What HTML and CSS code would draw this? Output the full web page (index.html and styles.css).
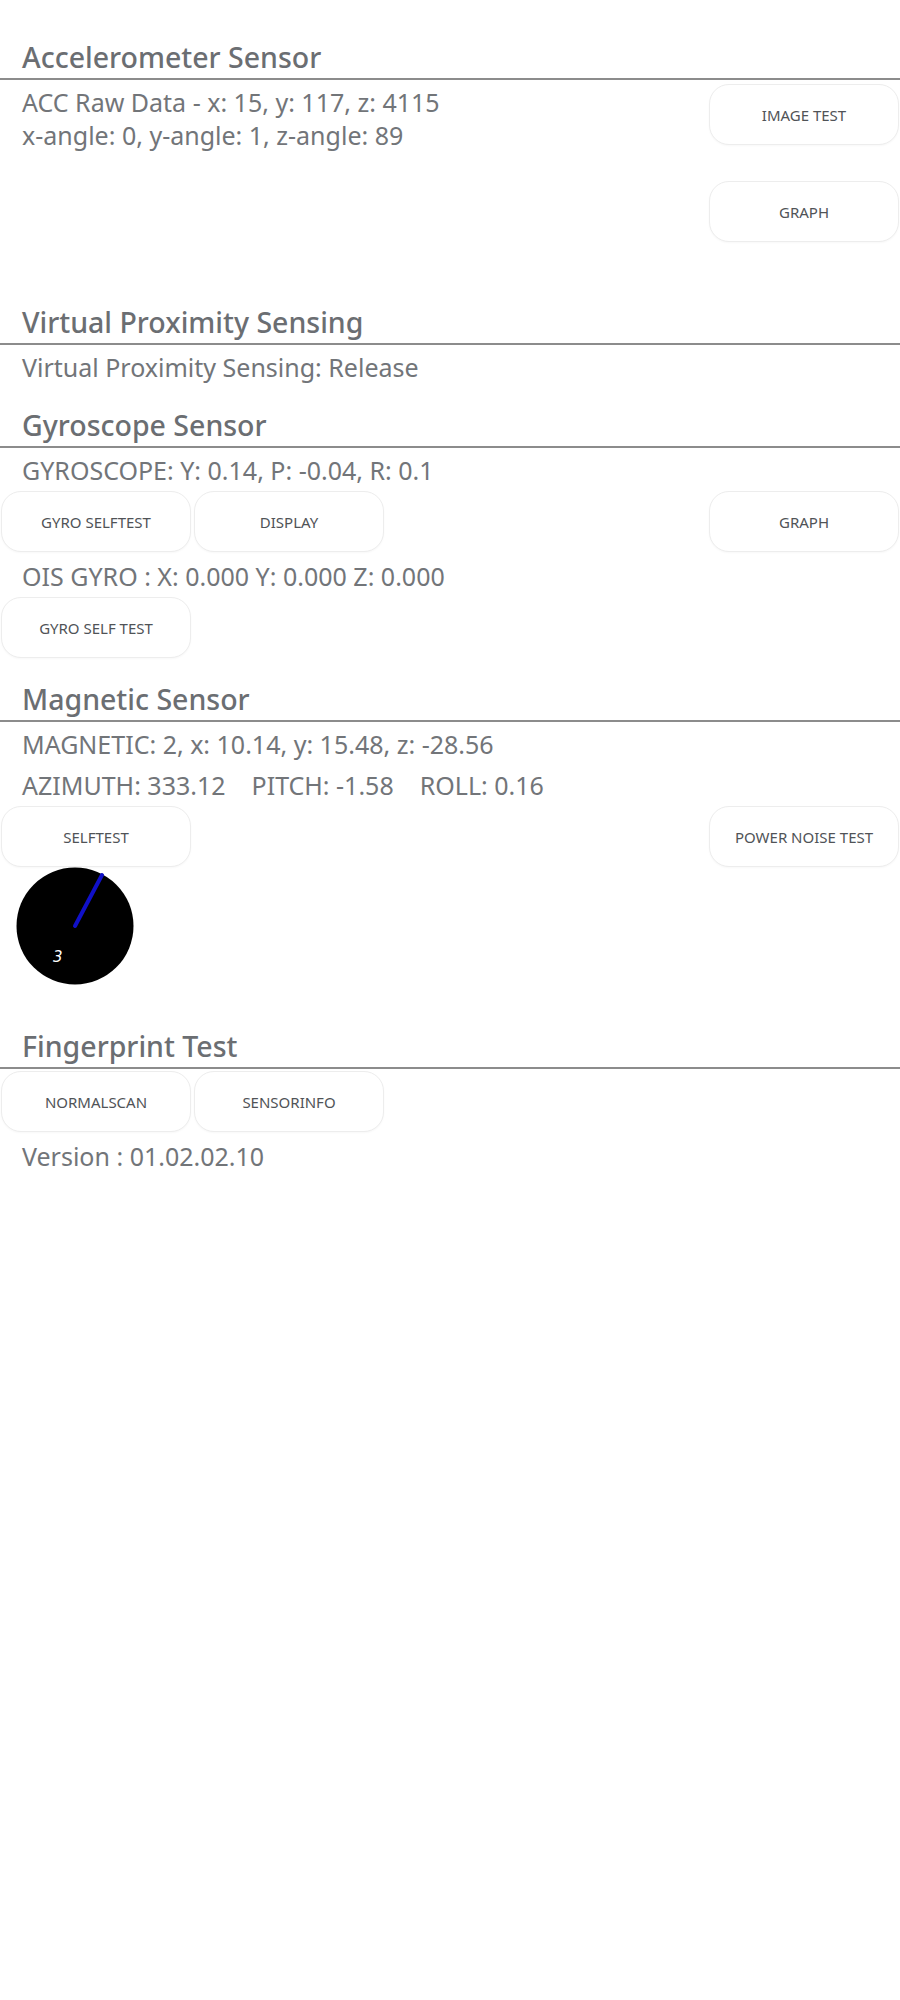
FILE: index.html
```html
<!DOCTYPE html>
<html lang="en">
<head>
  <meta charset="UTF-8">
  <meta name="viewport" content="width=device-width, initial-scale=1.0">
  <title>Sensor Test</title>
  <link rel="stylesheet" href="styles.css">
</head>
<body>
  <div class="page">

    <!-- Acelerômetro -->
    <section class="section">
      <h2 class="section-title">Accelerometer Sensor</h2>
      <div class="split">
        <p class="reading">ACC Raw Data - x: 15, y: 117, z: 4115<br>x-angle: 0, y-angle: 1, z-angle: 89</p>
        <div class="side-buttons">
          <button type="button" class="btn">IMAGE TEST</button>
          <button type="button" class="btn">GRAPH</button>
        </div>
      </div>
    </section>

    <!-- Proximidade virtual -->
    <section class="section">
      <h2 class="section-title">Virtual Proximity Sensing</h2>
      <p class="reading">Virtual Proximity Sensing: Release</p>
    </section>

    <!-- Giroscópio -->
    <section class="section">
      <h2 class="section-title">Gyroscope Sensor</h2>
      <p class="reading">GYROSCOPE: Y: 0.14, P: -0.04, R: 0.1</p>
      <div class="btn-row">
        <button type="button" class="btn">GYRO SELFTEST</button>
        <button type="button" class="btn">DISPLAY</button>
        <button type="button" class="btn push">GRAPH</button>
      </div>
      <p class="reading">OIS GYRO : X: 0.000 Y: 0.000 Z: 0.000</p>
      <div class="btn-row">
        <button type="button" class="btn">GYRO SELF TEST</button>
      </div>
    </section>

    <!-- Magnético -->
    <section class="section">
      <h2 class="section-title">Magnetic Sensor</h2>
      <p class="reading">MAGNETIC: 2, x: 10.14, y: 15.48, z: -28.56</p>
      <p class="reading">AZIMUTH: 333.12&nbsp;&nbsp;&nbsp; PITCH: -1.58&nbsp;&nbsp;&nbsp; ROLL: 0.16</p>
      <div class="btn-row tight">
        <button type="button" class="btn">SELFTEST</button>
        <button type="button" class="btn push">POWER NOISE TEST</button>
      </div>
      <div class="compass">
        <svg width="118" height="118" viewBox="0 0 118 118">
          <circle cx="59" cy="59" r="58.5" fill="#000"/>
          <line x1="59" y1="59" x2="86" y2="8" stroke="#1010c8" stroke-width="4" stroke-linecap="round"/>
          <text x="37" y="95" fill="#fff" font-family="DejaVu Sans, sans-serif" font-size="15" font-style="italic">3</text>
        </svg>
      </div>
    </section>

    <!-- Impressão digital -->
    <section class="section">
      <h2 class="section-title">Fingerprint Test</h2>
      <div class="btn-row">
        <button type="button" class="btn">NORMALSCAN</button>
        <button type="button" class="btn">SENSORINFO</button>
      </div>
      <p class="reading">Version : 01.02.02.10</p>
    </section>

  </div>
</body>
</html>
```

FILE: styles.css
```css
/* Layout geral */
body {
  margin: 0;
  background: #fff;
  font-family: "Noto Sans", "DejaVu Sans", sans-serif;
  color: #727579;
}

.page {
  display: flex;
  flex-direction: column;
  gap: 20px;
  padding-top: 40px;
}

/* Seções */
.section-title {
  margin: 0 0 2px;
  padding: 0 22px 4px;
  font-size: 28.5px;
  line-height: 34px;
  font-weight: 500;
  color: #6b6e72;
  border-bottom: 2px solid #8c8c8c;
}

/* Leituras dos sensores */
.reading {
  margin: 0;
  padding: 4px 22px;
  font-size: 25px;
  line-height: 33px;
}

/* Acelerômetro: texto à esquerda, botões à direita */
.split {
  display: flex;
  justify-content: space-between;
  align-items: flex-start;
}

.side-buttons {
  display: flex;
  flex-direction: column;
  gap: 36px;
  padding: 2px 1px 43px 0;
}

/* Botões */
.btn-row {
  display: flex;
  gap: 3px;
  padding: 0 1px;
  margin-bottom: 4px;
}

.btn-row.tight {
  margin-bottom: 0;
}

.btn-row .push {
  margin-left: auto;
}

.btn {
  width: 190px;
  height: 61px;
  border: 1px solid #ededed;
  border-radius: 20px;
  background: #fff;
  box-shadow: 0 1px 2px rgba(0, 0, 0, 0.03);
  font-family: "Noto Sans", "DejaVu Sans", sans-serif;
  font-size: 15px;
  color: #505357;
  padding: 0;
}

/* Bússola */
.compass {
  padding-left: 16px;
  margin-bottom: 24px;
  line-height: 0;
}
```
